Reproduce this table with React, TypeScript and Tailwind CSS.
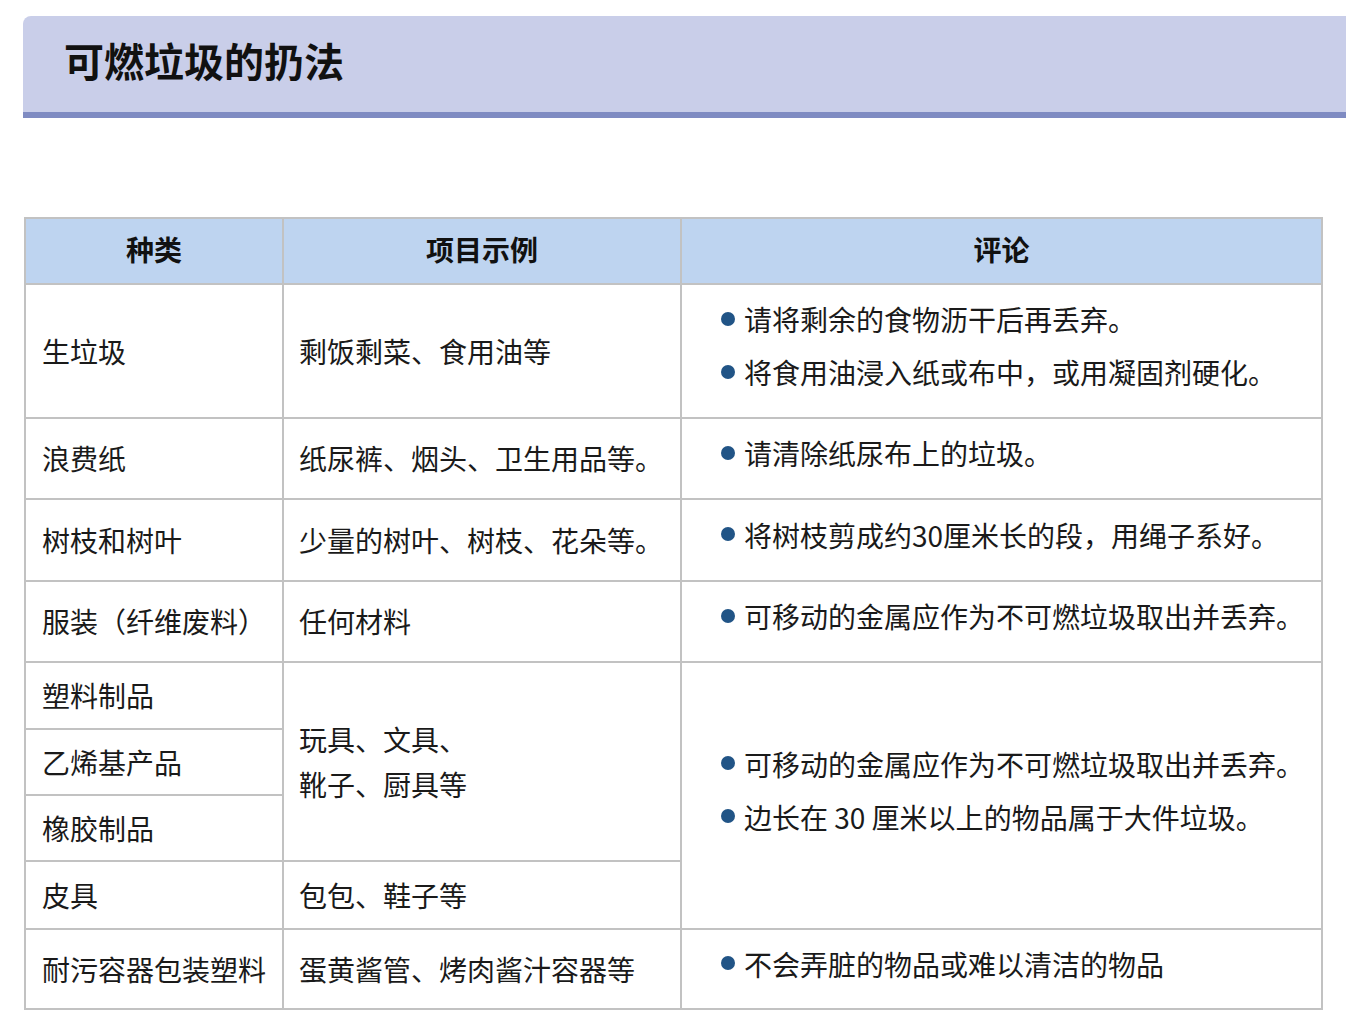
import React from "react";

const cell = "border-2 border-[#c2c2c2] align-middle";
const body = "text-[28px] leading-[45px] text-[#1a1a1a]";

function Notes({ items }: { items: string[] }) {
  return (
    <ul className="flex flex-col gap-2 pb-[10px]">
      {items.map((t) => (
        <li key={t} className="flex items-center">
          <span className="mr-[9px] -mt-[2px] h-[14px] w-[14px] shrink-0 rounded-full bg-[#215486]" />
          <span>{t}</span>
        </li>
      ))}
    </ul>
  );
}

export default function App() {
  return (
    <div className="min-h-screen bg-white pt-4 font-['Noto_Sans_CJK_SC','Noto_Sans',sans-serif]">
      <div className="ml-[23px] flex h-[102px] items-center rounded-tl-lg border-b-[6px] border-[#7f8bc2] bg-[#c9cee9] pb-[8px] pl-[41px]">
        <h1 className="text-[40px] font-bold leading-none text-[#111]">可燃垃圾的扔法</h1>
      </div>

      <table className={`ml-6 mt-[99px] w-[1299px] table-fixed border-collapse ${body}`}>
        <colgroup>
          <col className="w-[258px]" />
          <col className="w-[398px]" />
          <col className="w-[641px]" />
        </colgroup>
        <thead>
          <tr className="h-[66px] bg-[#bed4f0] font-bold text-[#111]">
            <th className={`${cell} pb-1 text-center`}>种类</th>
            <th className={`${cell} pb-1 text-center`}>项目示例</th>
            <th className={`${cell} pb-1 text-center`}>评论</th>
          </tr>
        </thead>
        <tbody>
          <tr className="h-[134px]">
            <td className={`${cell} pl-4`}>生垃圾</td>
            <td className={`${cell} pl-[15px]`}>剩饭剩菜、食用油等</td>
            <td className={`${cell} pl-[39px]`}>
              <Notes items={["请将剩余的食物沥干后再丢弃。", "将食用油浸入纸或布中，或用凝固剂硬化。"]} />
            </td>
          </tr>
          <tr className="h-[81px]">
            <td className={`${cell} pl-4`}>浪费纸</td>
            <td className={`${cell} pl-[15px]`}>纸尿裤、烟头、卫生用品等。</td>
            <td className={`${cell} pl-[39px]`}>
              <Notes items={["请清除纸尿布上的垃圾。"]} />
            </td>
          </tr>
          <tr className="h-[82px]">
            <td className={`${cell} pl-4`}>树枝和树叶</td>
            <td className={`${cell} pl-[15px]`}>少量的树叶、树枝、花朵等。</td>
            <td className={`${cell} pl-[39px]`}>
              <Notes items={["将树枝剪成约30厘米长的段，用绳子系好。"]} />
            </td>
          </tr>
          <tr className="h-[81px]">
            <td className={`${cell} pl-4`}>服装（纤维废料）</td>
            <td className={`${cell} pl-[15px]`}>任何材料</td>
            <td className={`${cell} pl-[39px]`}>
              <Notes items={["可移动的金属应作为不可燃垃圾取出并丢弃。"]} />
            </td>
          </tr>
          <tr className="h-[67px]">
            <td className={`${cell} pl-4`}>塑料制品</td>
            <td rowSpan={3} className={`${cell} pl-[15px]`}>
              玩具、文具、
              <br />
              靴子、厨具等
            </td>
            <td rowSpan={4} className={`${cell} pl-[39px]`}>
              <Notes items={["可移动的金属应作为不可燃垃圾取出并丢弃。", "边长在 30 厘米以上的物品属于大件垃圾。"]} />
            </td>
          </tr>
          <tr className="h-[66px]">
            <td className={`${cell} pl-4`}>乙烯基产品</td>
          </tr>
          <tr className="h-[66px]">
            <td className={`${cell} pl-4`}>橡胶制品</td>
          </tr>
          <tr className="h-[68px]">
            <td className={`${cell} pl-4`}>皮具</td>
            <td className={`${cell} pl-[15px]`}>包包、鞋子等</td>
          </tr>
          <tr className="h-[80px]">
            <td className={`${cell} pl-4`}>耐污容器包装塑料</td>
            <td className={`${cell} pl-[15px]`}>蛋黄酱管、烤肉酱汁容器等</td>
            <td className={`${cell} pl-[39px]`}>
              <Notes items={["不会弄脏的物品或难以清洁的物品"]} />
            </td>
          </tr>
        </tbody>
      </table>
    </div>
  );
}
